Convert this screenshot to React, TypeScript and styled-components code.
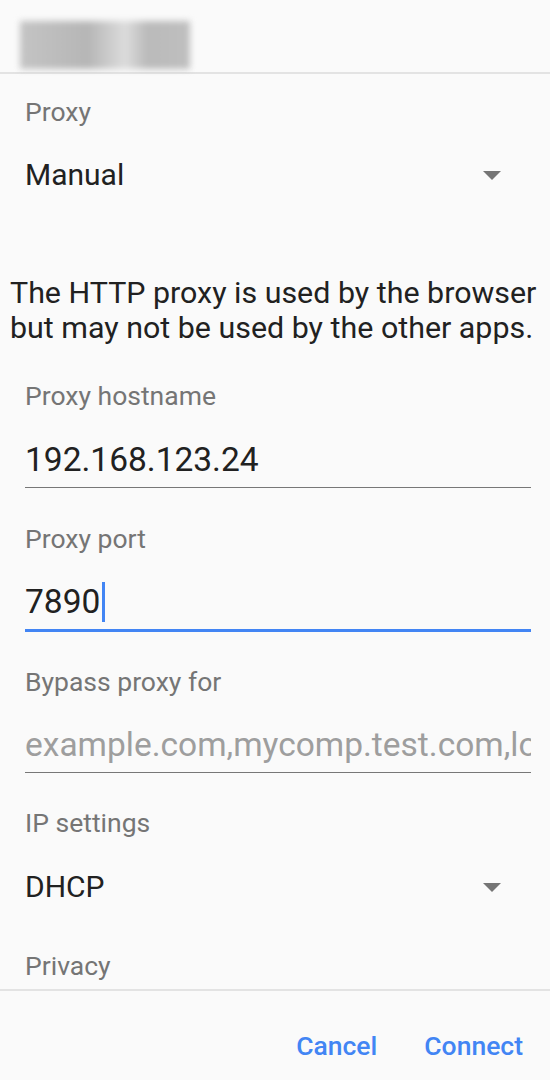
import React from "react";
import styled, { createGlobalStyle } from "styled-components";

const GlobalStyle = createGlobalStyle`
  html, body { margin: 0; padding: 0; background: #fafafa; }
  body { font-family: Roboto, "Noto Sans", sans-serif; -webkit-font-smoothing: antialiased; }
`;

const Dialog = styled.div`
  width: 550px;
  height: 1080px;
  background: #fafafa;
  display: flex;
  flex-direction: column;
  overflow: hidden;
`;

const Header = styled.div`
  flex: none;
  height: 74px;
  padding: 21px 0 0 20px;
  box-sizing: border-box;
  border-bottom: 2px solid #e3e3e3;
`;

const BlurredTitle = styled.div`
  width: 170px;
  height: 48px;
  background: linear-gradient(90deg, #c4c4c4 0%, #b6b6b6 40%, #dcdcdc 62%, #bababa 75%, #bfbfbf 100%);
  filter: blur(3px);
`;

const Body = styled.div`
  flex: 1;
  min-height: 0;
  overflow: hidden;
  display: flex;
  flex-direction: column;
`;

const Label = styled.div<{ $top: number }>`
  flex: none;
  margin: ${(p) => p.$top}px 0 0 25px;
  font-size: 26.5px;
  line-height: 32px;
  color: #757575;
`;

const SelectRow = styled.div<{ $top: number }>`
  flex: none;
  margin: ${(p) => p.$top}px 0 0 25px;
  padding-right: 49px;
  display: flex;
  align-items: center;
  justify-content: space-between;
  font-size: 30px;
  line-height: 36px;
  color: #212121;
`;

const Caret = styled.span`
  width: 0;
  height: 0;
  border-left: 9px solid transparent;
  border-right: 9px solid transparent;
  border-top: 9px solid #757575;
`;

const Note = styled.p`
  flex: none;
  margin: 82px 0 0 10px;
  font-size: 30.4px;
  line-height: 35px;
  color: #212121;
  white-space: nowrap;
`;

const Field = styled.div<{ $top: number; $focused?: boolean }>`
  flex: none;
  margin: ${(p) => p.$top}px 19px 0 25px;
  height: 47px;
  display: flex;
  align-items: flex-start;
  border-bottom: ${(p) => (p.$focused ? "3px solid #4285f4" : "1.5px solid #777777")};
  overflow: hidden;
  white-space: nowrap;
  font-size: 33.5px;
  line-height: 40px;
  color: #212121;
`;

const Placeholder = styled.span`
  color: #9e9e9e;
`;

const Cursor = styled.span`
  flex: none;
  display: inline-block;
  width: 3px;
  height: 40px;
  margin: 0 0 0 2px;
  background: #4285f4;
`;

const Footer = styled.div`
  flex: none;
  height: 91px;
  box-sizing: border-box;
  border-top: 2px solid #e3e3e3;
  display: flex;
  justify-content: flex-end;
  align-items: flex-start;
  gap: 47px;
  padding: 39px 27px 0 0;
`;

const ActionButton = styled.button`
  background: none;
  border: none;
  padding: 0;
  font-family: Roboto, sans-serif;
  font-weight: 500;
  font-size: 26.5px;
  line-height: 32px;
  color: #4285f4;
`;

export default function App() {
  return (
    <>
      <GlobalStyle />
      <Dialog>
        <Header>
          <BlurredTitle />
        </Header>
        <Body>
          <Label $top={22}>Proxy</Label>
          <SelectRow $top={29}>
            <span>Manual</span>
            <Caret />
          </SelectRow>
          <Note>
            The HTTP proxy is used by the browser
            <br />
            but may not be used by the other apps.
          </Note>
          <Label $top={35}>Proxy hostname</Label>
          <Field $top={28}>192.168.123.24</Field>
          <Label $top={35}>Proxy port</Label>
          <Field $top={27} $focused>
            7890
            <Cursor />
          </Field>
          <Label $top={34}>Bypass proxy for</Label>
          <Field $top={27}>
            <Placeholder>example.com,mycomp.test.com,localhost</Placeholder>
          </Field>
          <Label $top={34}>IP settings</Label>
          <SelectRow $top={30}>
            <span>DHCP</span>
            <Caret />
          </SelectRow>
          <Label $top={45}>Privacy</Label>
        </Body>
        <Footer>
          <ActionButton>Cancel</ActionButton>
          <ActionButton>Connect</ActionButton>
        </Footer>
      </Dialog>
    </>
  );
}
